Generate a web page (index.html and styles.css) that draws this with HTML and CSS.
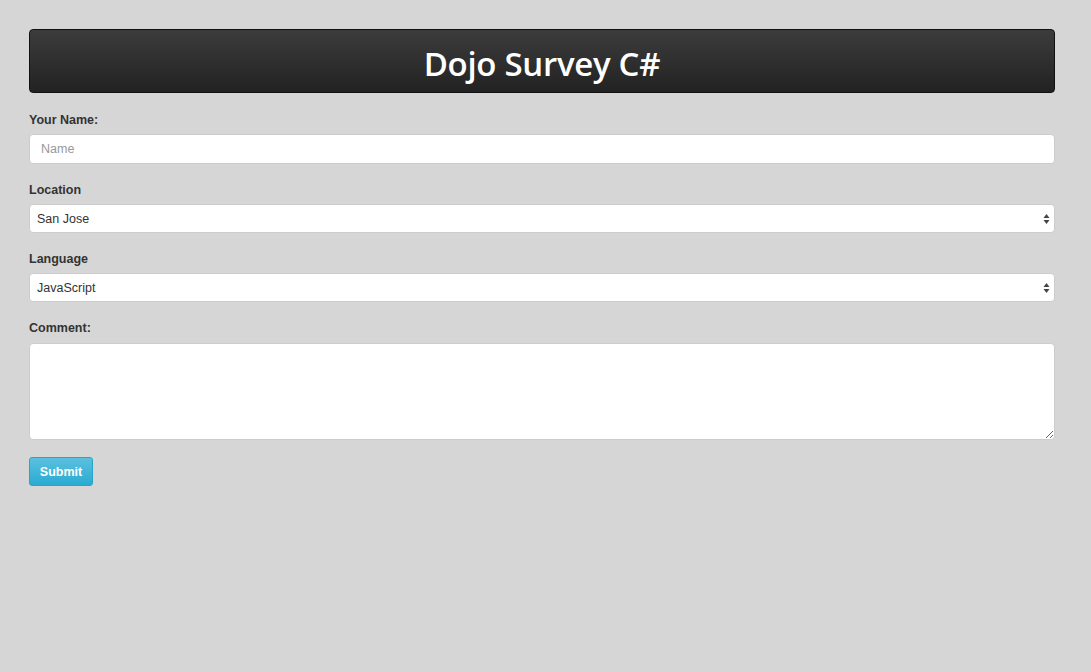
FILE: index.html
```html
<!DOCTYPE html>
<html>
<head>
<meta charset="utf-8">
<title>Dojo Survey C#</title>
<link rel="stylesheet" href="styles.css">
</head>
<body>
<div class="page">
  <header class="banner"><h1 class="title">Dojo Survey C#</h1></header>
  <form class="survey">
    <div class="group">
      <label class="label" for="name">Your Name:</label>
      <input class="control input" id="name" type="text" placeholder="Name">
    </div>
    <div class="group">
      <label class="label" for="loc">Location</label>
      <select class="control select" id="loc"><option>San Jose</option><option>Seattle</option></select>
    </div>
    <div class="group">
      <label class="label" for="lang">Language</label>
      <select class="control select" id="lang"><option>JavaScript</option><option>C#</option></select>
    </div>
    <div class="group">
      <label class="label" for="comment">Comment:</label>
      <textarea class="control textarea" id="comment"></textarea>
    </div>
    <button class="submit" type="button">Submit</button>
  </form>
</div>
</body>
</html>
```
FILE: styles.css
```css
* { box-sizing: border-box; }
html, body { margin: 0; background: #d6d6d6; }
body { font-family: "Liberation Sans", Arial, sans-serif; color: #333; }
.page { padding: 29px 36px 29px 29px; }
.banner {
  height: 64px;
  border: 1px solid #111;
  border-radius: 4px;
  background: linear-gradient(#3c3c3c, #222);
  display: flex;
  align-items: center;
  justify-content: center;
  margin-bottom: 16px;
}
.title {
  margin: 0;
  color: #fff;
  font-family: "Open Sans", sans-serif;
  font-weight: 600;
  font-size: 33px;
  letter-spacing: -0.3px;
  line-height: 1;
  padding-top: 4px;
}
.survey { display: flex; flex-direction: column; align-items: flex-start; }
.group { width: 100%; margin-bottom: 15px; display: flex; flex-direction: column; }
.label { font-size: 12.5px; font-weight: bold; line-height: 18px; padding-top: 2px; margin-bottom: 5px; color: #333; }
.control {
  width: 100%;
  border: 1px solid #ccc;
  border-radius: 4px;
  background: #fff;
  font-family: "Liberation Sans", Arial, sans-serif;
  font-size: 12px;
  color: #333;
  outline: none;
}
.input { height: 30px; padding: 0 11px; font-size: 12.5px; }
.input::placeholder { color: #999; }
.select {
  height: 29px;
  padding: 0 7px;
  font-size: 12.5px;
  appearance: none;
  -webkit-appearance: none;
  background-image: url("data:image/svg+xml;utf8,<svg xmlns='http://www.w3.org/2000/svg' width='7' height='12'><path d='M3.5 1 L6.5 5 L0.5 5 Z M3.5 11 L6.5 7 L0.5 7 Z' fill='%23444'/></svg>");
  background-repeat: no-repeat;
  background-position: right 4px center;
}
.textarea { height: 97px; resize: vertical; display: block; margin-top: 1px; }
.submit {
  margin-top: 2px;
  width: 64px;
  height: 29px;
  border: 1px solid #28a4c9;
  border-radius: 3px;
  background: linear-gradient(#5bc0de, #2aabd2);
  color: #fff;
  font-family: "Liberation Sans", Arial, sans-serif;
  font-size: 12.5px;
  font-weight: bold;
  padding: 0;
}
```
